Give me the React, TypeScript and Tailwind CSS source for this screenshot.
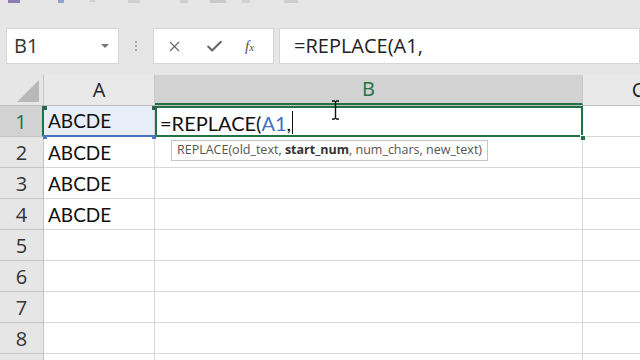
import { Check, X } from 'lucide-react';

const rows = [1, 2, 3, 4, 5, 6, 7, 8, 9];

const RibbonStub = () => (
  <div className="h-[28px] flex items-start">
    <div className="ml-[8px] w-[12px] h-[3px] bg-[#8e7bb3]" />
    <div className="ml-[38px] w-[6px] h-[3px] bg-[#8fa6c8]" />
    <div className="ml-[26px] w-[5px] h-[2px] bg-[#cfcfcf]" />
    <div className="ml-[33px] w-[12px] h-[3px] bg-[#d0d0d0]" />
    <div className="ml-[40px] w-[8px] h-[3px] bg-[#cdcdcd]" />
    <div className="ml-[22px] w-[16px] h-[3px] bg-[#c8c8c8]" />
    <div className="ml-[16px] w-[8px] h-[3px] bg-[#d2d2d2]" />
    <div className="ml-[34px] w-[14px] h-[3px] bg-[#cdcdcd]" />
  </div>
);

const FormulaBar = () => (
  <div className="h-[36px] flex pl-[6px]">
    <div className="w-[113px] shrink-0 bg-white border border-[#d6d6d6] flex items-center justify-between pl-[7px] pr-[9px]">
      <span className="text-[20px] text-[#333] leading-none">B1</span>
      <span className="w-0 h-0 border-l-[4px] border-r-[4px] border-t-[4px] border-l-transparent border-r-transparent border-t-[#777]" />
    </div>
    <div className="w-[34px] shrink-0 flex flex-col items-center justify-center gap-[2px]">
      <span className="w-[2px] h-[2px] bg-[#a8a8a8]" />
      <span className="w-[2px] h-[2px] bg-[#a8a8a8]" />
      <span className="w-[2px] h-[2px] bg-[#a8a8a8]" />
    </div>
    <div className="w-[121px] shrink-0 bg-white border border-[#d6d6d6] flex items-center pl-[12px]">
      <X size={17} strokeWidth={1.6} className="text-[#666]" />
      <Check size={19} strokeWidth={2.6} className="text-[#666] ml-[22px]" />
      <span className="ml-[21px] text-[15px] italic text-[#555] font-['Liberation_Serif',serif] leading-none">
        f<span className="text-[11px]">x</span>
      </span>
    </div>
    <div className="flex-1 ml-[5px] bg-white border border-[#d6d6d6] flex items-center pl-[14px]">
      <span className="text-[20px] text-[#222] leading-none">=REPLACE(A1,</span>
    </div>
  </div>
);

const ColumnHeaders = () => (
  <div className="h-[31px] flex border-b border-[#bdbdbd]">
    <div className="w-[44px] shrink-0 bg-[#e6e6e6] border-r border-[#c4c4c4] flex items-end justify-end pr-[4px] pb-[3px]">
      <svg width="22" height="22" viewBox="0 0 22 22">
        <polygon points="0,22 22,22 22,0" fill="#b8b8b8" />
      </svg>
    </div>
    <div className="w-[111px] shrink-0 bg-[#e9e9e9] border-r border-[#c8c8c8] flex items-center justify-center text-[20px] text-[#222]">
      A
    </div>
    <div className="w-[428px] shrink-0 bg-[#d2d2d2] border-r border-[#c8c8c8] border-b-2 border-b-[#217346] flex items-center justify-center text-[20px] text-[#217346]">
      B
    </div>
    <div className="w-[110px] shrink-0 bg-[#e9e9e9] flex items-center justify-center text-[20px] text-[#222]">
      C
    </div>
  </div>
);

const Row = ({ n }: { n: number }) => {
  const first = n === 1;
  const hasValue = n <= 4;
  return (
    <div className="h-[31px] flex shrink-0">
      <div
        className={`w-[44px] shrink-0 flex items-center justify-center pt-[1px] text-[20px] border-r border-b ${
          first
            ? 'bg-[#d2d2d2] text-[#217346] border-b-[#c4c4c4] border-r-[#217346] border-r-2'
            : 'bg-[#e6e6e6] text-[#333] border-[#c4c4c4]'
        }`}
      >
        {n < 9 ? n : ''}
      </div>
      <div
        className={`w-[111px] shrink-0 flex items-center pl-[4px] pt-[2px] text-[19px] font-['Lato',sans-serif] text-[#111] border-r border-b ${
          first
            ? 'bg-[#e8eef8] border-b-2 border-b-[#4a74c0] border-r-[#d4d4d4]'
            : 'bg-white border-[#d8d8d8]'
        }`}
      >
        {hasValue ? 'ABCDE' : ''}
      </div>
      {first ? (
        <div className="w-[428px] shrink-0 bg-white border-2 border-[#217346] flex items-center pl-[3px] pt-[2px] text-[20px] font-['Lato',sans-serif] text-[#111]">
          <span>=REPLACE(</span>
          <span className="text-[#4472c4]">A1</span>
          <span>,</span>
          <span className="w-px h-[23px] bg-[#111] ml-[1px]" />
        </div>
      ) : (
        <div className="w-[428px] shrink-0 bg-white border-r border-b border-[#d8d8d8]" />
      )}
      <div className="w-[110px] shrink-0 bg-white border-b border-[#d8d8d8]" />
    </div>
  );
};

export default function App() {
  return (
    <div className="w-[640px] h-[360px] overflow-hidden bg-[#e6e6e6] relative font-['Open_Sans',sans-serif]">
      <RibbonStub />
      <FormulaBar />
      <div className="h-[11px]" />
      <div className="bg-white">
        <ColumnHeaders />
        {rows.map((n) => (
          <Row key={n} n={n} />
        ))}
      </div>

      {/* range handles */}
      <span className="absolute left-[43px] top-[106px] w-[4px] h-[4px] bg-[#2f5f4f]" />
      <span className="absolute left-[152px] top-[106px] w-[4px] h-[4px] bg-[#2f5f4f]" />
      <span className="absolute left-[43px] top-[135px] w-[4px] h-[4px] bg-[#4a74c0]" />
      <span className="absolute left-[152px] top-[135px] w-[4px] h-[4px] bg-[#4a74c0]" />
      <span className="absolute left-[580px] top-[135px] w-[6px] h-[6px] bg-[#217346] border border-white" />

      {/* function tooltip */}
      <div className="absolute left-[171px] top-[140px] h-[21px] px-[5px] bg-white border border-[#c6c6c6] flex items-center text-[12.5px] text-[#555] whitespace-nowrap">
        REPLACE(old_text,&nbsp;<b className="text-[#333] font-bold">start_num</b>, num_chars, new_text)
      </div>

      {/* mouse I-beam */}
      <svg className="absolute left-[331px] top-[100px]" width="9" height="20" viewBox="0 0 9 20">
        <path d="M1 1h3M5 1h3M4.5 1v18M1 19h3M5 19h3" stroke="#111" strokeWidth="1.4" fill="none" />
      </svg>
    </div>
  );
}
